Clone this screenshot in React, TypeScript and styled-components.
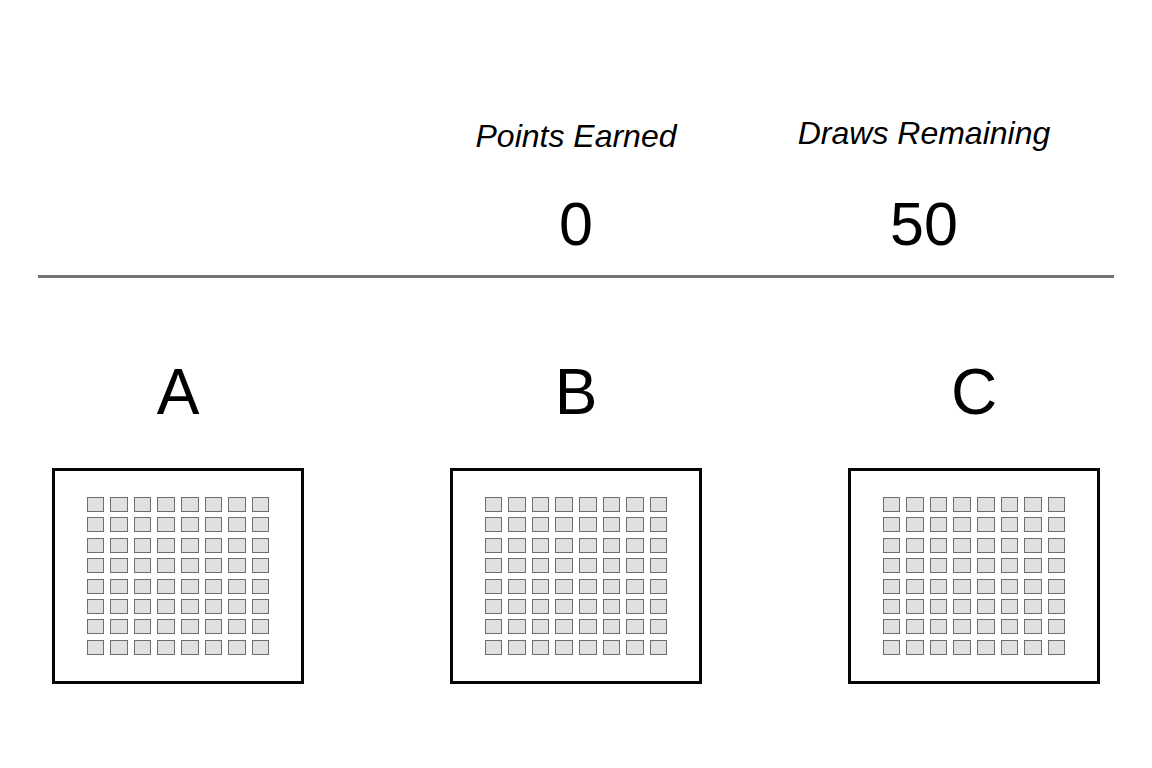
import styled, { createGlobalStyle } from "styled-components";

const GlobalStyle = createGlobalStyle`
    html, body {
        margin: 0;
        padding: 0;
        background: #ffffff;
    }
    body {
        font-family: "Liberation Sans", Arial, sans-serif;
        color: #000000;
    }
`;

const Page = styled.div`
    width: 1152px;
    padding: 118px 38px 0;
    box-sizing: border-box;
`;

const Scoreboard = styled.header`
    display: grid;
    grid-template-columns: 364px 348px 348px 1fr;
    border-bottom: 3px solid #747474;
    padding-bottom: 15.6px;
`;

const Stat = styled.div`
    display: flex;
    flex-direction: column;
    align-items: center;
`;

const StatLabel = styled.div<{ $lift?: number }>`
    font-size: 32px;
    line-height: 1.15;
    font-style: italic;
    margin-top: ${(props) => -(props.$lift ?? 0)}px;
    margin-bottom: ${(props) => 34.4 + (props.$lift ?? 0)}px;
`;

const StatValue = styled.div`
    font-size: 61px;
    line-height: 1.15;
`;

const Panels = styled.section`
    display: grid;
    grid-template-columns: repeat(3, 252px);
    justify-content: space-between;
    padding: 78px 14px 0;
`;

const Panel = styled.div`
    display: flex;
    flex-direction: column;
    align-items: center;
`;

const PanelTitle = styled.div`
    font-size: 64px;
    line-height: 1.15;
    margin-bottom: 38.4px;
`;

const Board = styled.div`
    width: 252px;
    height: 216px;
    box-sizing: border-box;
    border: 3px solid #050505;
    display: flex;
    align-items: center;
    justify-content: center;
`;

const Cells = styled.div`
    display: grid;
    grid-template-columns: repeat(8, 17.7px);
    grid-auto-rows: 15px;
    column-gap: 5.9px;
    row-gap: 5.4px;
`;

const Cell = styled.div`
    box-sizing: border-box;
    background: #e0e0e0;
    border: 1px solid #6e6e6e;
`;

const stats = [
    { label: "Points Earned", value: 0, lift: 0 },
    { label: "Draws Remaining", value: 50, lift: 3 },
];

const panels = ["A", "B", "C"];
const cells = Array.from({ length: 64 }, (_, i) => i);

function App() {
    return (
        <>
            <GlobalStyle />
            <Page>
                <Scoreboard>
                    <div />
                    {stats.map((stat) => (
                        <Stat key={stat.label}>
                            <StatLabel $lift={stat.lift}>{stat.label}</StatLabel>
                            <StatValue>{stat.value}</StatValue>
                        </Stat>
                    ))}
                </Scoreboard>
                <Panels>
                    {panels.map((name) => (
                        <Panel key={name}>
                            <PanelTitle>{name}</PanelTitle>
                            <Board>
                                <Cells>
                                    {cells.map((i) => (
                                        <Cell key={i} />
                                    ))}
                                </Cells>
                            </Board>
                        </Panel>
                    ))}
                </Panels>
            </Page>
        </>
    );
}

export default App;
